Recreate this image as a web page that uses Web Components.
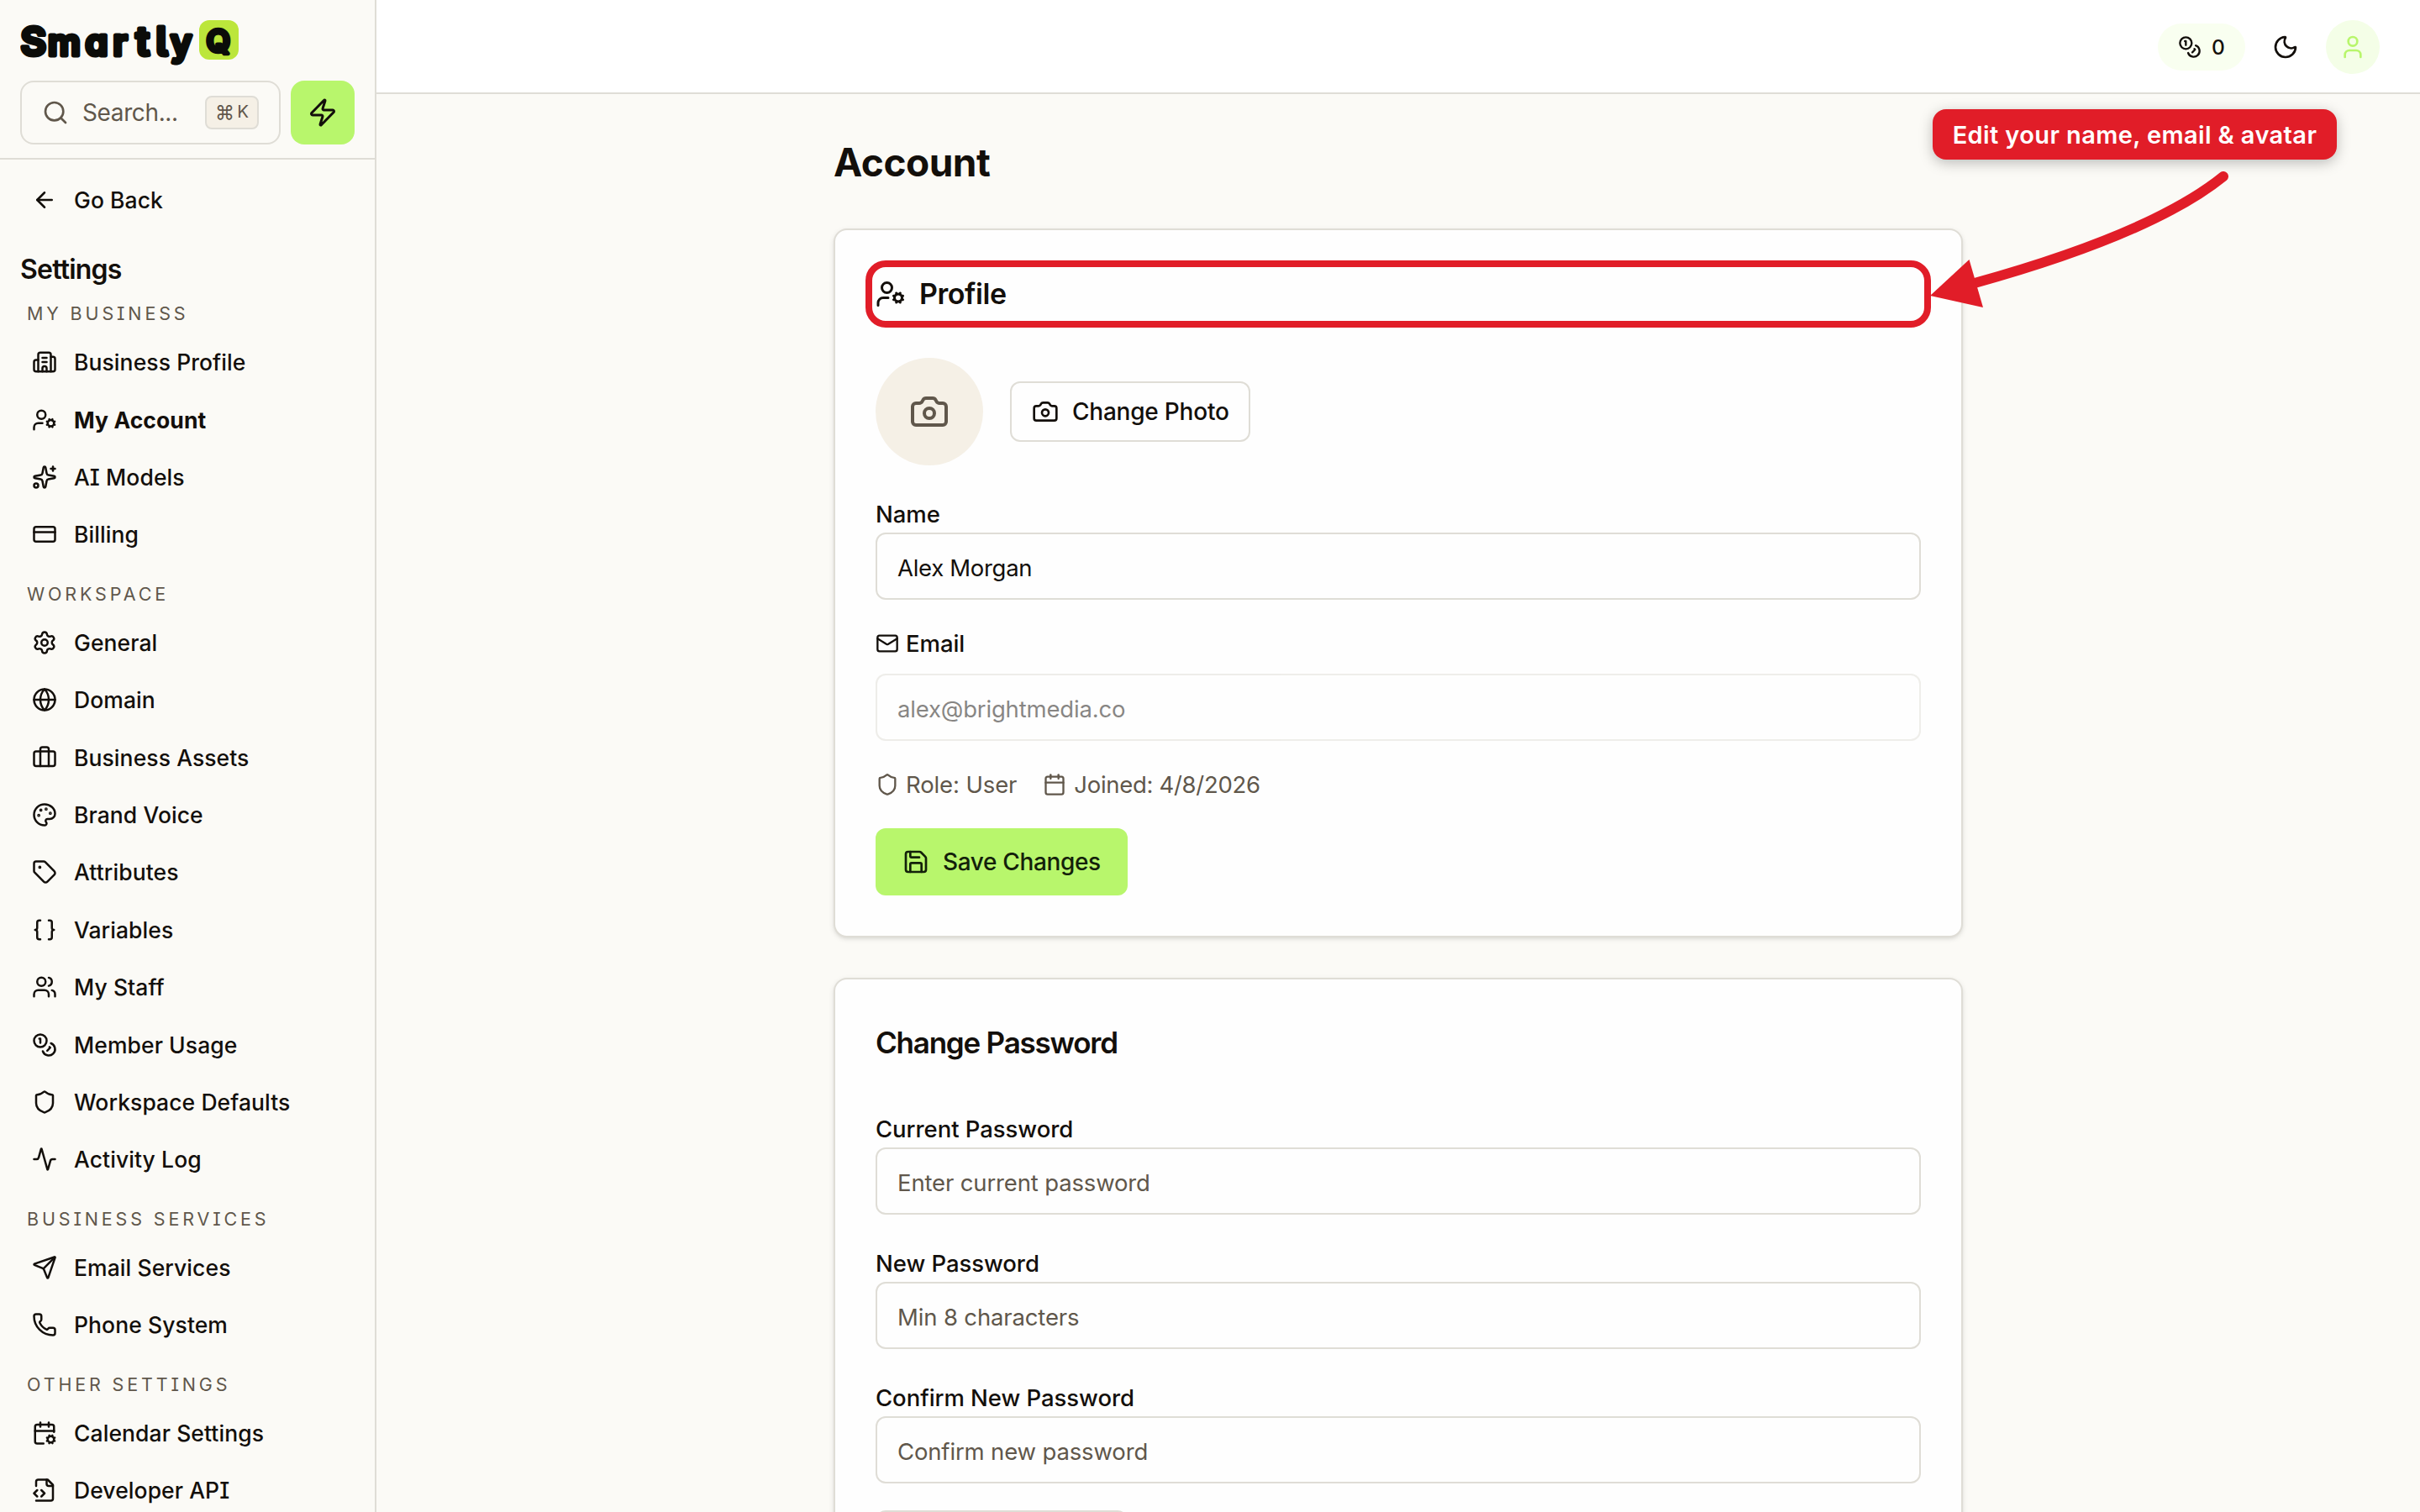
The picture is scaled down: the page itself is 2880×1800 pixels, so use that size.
<!DOCTYPE html>
<html lang="en">
<head>
    <meta charset="utf-8">
    <title>SmartlyQ - Account</title>
    <style>
        :root {
            --bg: #fbfaf6;
            --card: #fefefe;
            --line: #dfddd6;
            --ink: #130f0b;
            --muted: #60574b;
            --sand: #f5f0e6;
            --lime: #b8f66c;
            --red: #e11d28;
        }

        body {
            margin: 0;
            width: 2880px;
            height: 1800px;
            overflow: hidden;
            display: grid;
            grid-template-columns: 448px 1fr;
            background: var(--bg);
            color: var(--ink);
            font: 400 27.5px/40px Inter, "Liberation Sans", sans-serif;
            font-feature-settings: "cv08";
        }
    </style>
</head>
<body>
    <side-bar></side-bar>
    <account-page></account-page>

    <script>
        // 24x24 stroke icons
        const ICONS = {
            search: '<path d="m21 21-4.34-4.34"/><circle cx="11" cy="11" r="8"/>',
            zap: '<path d="M4 14a1 1 0 0 1-.78-1.63l9.9-10.2a.5.5 0 0 1 .86.46l-1.92 6.02A1 1 0 0 0 13 10h7a1 1 0 0 1 .78 1.63l-9.9 10.2a.5.5 0 0 1-.86-.46l1.92-6.02A1 1 0 0 0 11 14z"/>',
            back: '<path d="m12 19-7-7 7-7"/><path d="M19 12H5"/>',
            building: '<path d="M10 12h4"/><path d="M10 8h4"/><path d="M14 21v-3a2 2 0 0 0-4 0v3"/><path d="M6 10H4a2 2 0 0 0-2 2v7a2 2 0 0 0 2 2h16a2 2 0 0 0 2-2V9a2 2 0 0 0-2-2h-2"/><path d="M6 21V5a2 2 0 0 1 2-2h8a2 2 0 0 1 2 2v16"/>',
            userCog: '<path d="M10 15H6a4 4 0 0 0-4 4v2"/><path d="m14.305 16.53.923-.382"/><path d="m15.228 13.852-.923-.383"/><path d="m16.852 12.228-.383-.923"/><path d="m16.852 17.772-.383.924"/><path d="m19.148 12.228.383-.923"/><path d="m19.53 18.696-.382-.924"/><path d="m20.772 13.852.924-.383"/><path d="m20.772 16.148.924.383"/><circle cx="18" cy="15" r="3"/><circle cx="9" cy="7" r="4"/>',
            sparkles: '<path d="M11.017 2.814a1 1 0 0 1 1.966 0l1.051 5.558a2 2 0 0 0 1.594 1.594l5.558 1.051a1 1 0 0 1 0 1.966l-5.558 1.051a2 2 0 0 0-1.594 1.594l-1.051 5.558a1 1 0 0 1-1.966 0l-1.051-5.558a2 2 0 0 0-1.594-1.594l-5.558-1.051a1 1 0 0 1 0-1.966l5.558-1.051a2 2 0 0 0 1.594-1.594z"/><path d="M20 2v4"/><path d="M22 4h-4"/><circle cx="4" cy="20" r="2"/>',
            card: '<rect width="20" height="14" x="2" y="5" rx="2"/><path d="M2 10h20"/>',
            gear: '<path d="M9.671 4.136a2.34 2.34 0 0 1 4.659 0 2.34 2.34 0 0 0 3.319 1.915 2.34 2.34 0 0 1 2.33 4.033 2.34 2.34 0 0 0 0 3.831 2.34 2.34 0 0 1-2.33 4.033 2.34 2.34 0 0 0-3.319 1.915 2.34 2.34 0 0 1-4.659 0 2.34 2.34 0 0 0-3.32-1.915 2.34 2.34 0 0 1-2.33-4.033 2.34 2.34 0 0 0 0-3.831A2.34 2.34 0 0 1 6.35 6.051a2.34 2.34 0 0 0 3.319-1.915"/><circle cx="12" cy="12" r="3"/>',
            globe: '<circle cx="12" cy="12" r="10"/><path d="M12 2a14.5 14.5 0 0 0 0 20 14.5 14.5 0 0 0 0-20"/><path d="M2 12h20"/>',
            briefcase: '<path d="M16 20V4a2 2 0 0 0-2-2h-4a2 2 0 0 0-2 2v16"/><rect width="20" height="14" x="2" y="6" rx="2"/>',
            palette: '<path d="M12 22a1 1 0 0 1 0-20 10 9 0 0 1 10 9 5 5 0 0 1-5 5h-2.25a1.75 1.75 0 0 0-1.4 2.8l.3.4a1.75 1.75 0 0 1-1.4 2.8z"/><circle cx="13.5" cy="6.5" r=".5" fill="currentColor"/><circle cx="17.5" cy="10.5" r=".5" fill="currentColor"/><circle cx="6.5" cy="12.5" r=".5" fill="currentColor"/><circle cx="8.5" cy="7.5" r=".5" fill="currentColor"/>',
            tag: '<path d="M12.586 2.586A2 2 0 0 0 11.172 2H4a2 2 0 0 0-2 2v7.172a2 2 0 0 0 .586 1.414l8.704 8.704a2.426 2.426 0 0 0 3.42 0l6.58-6.58a2.426 2.426 0 0 0 0-3.42z"/><circle cx="7.5" cy="7.5" r=".5" fill="currentColor"/>',
            braces: '<path d="M8 3H7a2 2 0 0 0-2 2v5a2 2 0 0 1-2 2 2 2 0 0 1 2 2v5c0 1.1.9 2 2 2h1"/><path d="M16 21h1a2 2 0 0 0 2-2v-5c0-1.1.9-2 2-2a2 2 0 0 1-2-2V5a2 2 0 0 0-2-2h-1"/>',
            users: '<path d="M16 21v-2a4 4 0 0 0-4-4H6a4 4 0 0 0-4 4v2"/><path d="M16 3.128a4 4 0 0 1 0 7.744"/><path d="M22 21v-2a4 4 0 0 0-3-3.87"/><circle cx="9" cy="7" r="4"/>',
            coins: '<circle cx="8" cy="8" r="6"/><path d="M18.09 10.37A6 6 0 1 1 10.34 18"/><path d="M7 6h1v4"/><path d="m16.71 13.88.7.71-2.82 2.82"/>',
            shield: '<path d="M20 13c0 5-3.5 7.5-7.66 8.95a1 1 0 0 1-.67-.01C7.5 20.5 4 18 4 13V6a1 1 0 0 1 1-1c2 0 4.5-1.2 6.24-2.72a1.17 1.17 0 0 1 1.52 0C14.51 3.81 17 5 19 5a1 1 0 0 1 1 1z"/>',
            activity: '<path d="M22 12h-2.48a2 2 0 0 0-1.93 1.46l-2.35 8.36a.25.25 0 0 1-.48 0L9.24 2.18a.25.25 0 0 0-.48 0l-2.35 8.36A2 2 0 0 1 4.49 12H2"/>',
            send: '<path d="M14.536 21.686a.5.5 0 0 0 .937-.024l6.5-19a.496.496 0 0 0-.635-.635l-19 6.5a.5.5 0 0 0-.024.937l7.93 3.18a2 2 0 0 1 1.112 1.11z"/><path d="m21.854 2.147-10.94 10.939"/>',
            phone: '<path d="M13.832 16.568a1 1 0 0 0 1.213-.303l.355-.465A2 2 0 0 1 17 15h3a2 2 0 0 1 2 2v3a2 2 0 0 1-2 2A18 18 0 0 1 2 4a2 2 0 0 1 2-2h3a2 2 0 0 1 2 2v3a2 2 0 0 1-.8 1.6l-.468.351a1 1 0 0 0-.292 1.233 14 14 0 0 0 6.392 6.384"/>',
            calendarCog: '<path d="m15.228 16.852-.923-.383"/><path d="m15.228 19.148-.923.383"/><path d="M16 2v4"/><path d="m16.47 14.305.382.923"/><path d="m16.852 20.772-.383.924"/><path d="m19.148 15.228.383-.923"/><path d="m19.53 21.696-.382-.924"/><path d="m20.772 16.852.924-.383"/><path d="m20.772 19.148.924.383"/><path d="M21 11V6a2 2 0 0 0-2-2H5a2 2 0 0 0-2 2v14a2 2 0 0 0 2 2h6"/><path d="M3 10h18"/><path d="M8 2v4"/><circle cx="18" cy="18" r="3"/>',
            fileCode: '<path d="M4 22h14a2 2 0 0 0 2-2V7l-5-5H6a2 2 0 0 0-2 2v4"/><path d="M14 2v4a2 2 0 0 0 2 2h4"/><path d="m5 12-3 3 3 3"/><path d="m9 18 3-3-3-3"/>',
            moon: '<path d="M20.985 12.486a9 9 0 1 1-9.473-9.472c.405-.022.617.46.402.803a6 6 0 0 0 8.268 8.268c.344-.215.825-.004.803.401"/>',
            user: '<path d="M19 21v-2a4 4 0 0 0-4-4H9a4 4 0 0 0-4 4v2"/><circle cx="12" cy="7" r="4"/>',
            camera: '<path d="M13.997 4a2 2 0 0 1 1.76 1.05l.486.9A2 2 0 0 0 18.003 7H20a2 2 0 0 1 2 2v9a2 2 0 0 1-2 2H4a2 2 0 0 1-2-2V9a2 2 0 0 1 2-2h1.997a2 2 0 0 0 1.759-1.048l.489-.904A2 2 0 0 1 10.004 4z"/><circle cx="12" cy="13" r="3"/>',
            mail: '<path d="m22 7-8.991 5.727a2 2 0 0 1-2.009 0L2 7"/><rect x="2" y="4" width="20" height="16" rx="2"/>',
            calendar: '<path d="M8 2v4"/><path d="M16 2v4"/><rect width="18" height="18" x="3" y="4" rx="2"/><path d="M3 10h18"/>',
            save: '<path d="M15.2 3a2 2 0 0 1 1.4.6l3.8 3.8a2 2 0 0 1 .6 1.4V19a2 2 0 0 1-2 2H5a2 2 0 0 1-2-2V5a2 2 0 0 1 2-2z"/><path d="M17 21v-7a1 1 0 0 0-1-1H8a1 1 0 0 0-1 1v7"/><path d="M7 3v4a1 1 0 0 0 1 1h7"/>'
        };

        class UiIcon extends HTMLElement {
            constructor() {
                super();
                this.attachShadow({ mode: 'open' });
            }

            connectedCallback() {
                const size = this.getAttribute('size') || 30;
                this.shadowRoot.innerHTML = `
                    <style>
                        :host { display: block; flex: none; width: ${size}px; height: ${size}px; }
                        svg { display: block; }
                    </style>
                    <svg width="${size}" height="${size}" viewBox="0 0 24 24" fill="none" stroke="currentColor"
                        stroke-width="2" stroke-linecap="round" stroke-linejoin="round">${ICONS[this.getAttribute('name')]}</svg>
                `;
            }
        }
        customElements.define('ui-icon', UiIcon);

        class BrandLogo extends HTMLElement {
            constructor() {
                super();
                this.attachShadow({ mode: 'open' }).innerHTML = `
                    <style>
                        :host { display: block; width: 264px; height: 64px; }
                        svg { display: block; }
                        text {
                            font: 600 43px Inter, sans-serif;
                            font-feature-settings: "cv11", "cv05";
                            fill: #0b0c09;
                            stroke: #0b0c09;
                            stroke-width: 5;
                            stroke-linejoin: round;
                        }
                        .tall { font-size: 47px; }
                        .q { font-size: 37px; stroke-width: 4.5px; }
                    </style>
                    <svg width="264" height="64" viewBox="24 20 264 64">
                        <rect x="237" y="24" width="47" height="47" rx="12" fill="#bce63b"/>
                        <text y="65.500" x="24.500 57 101.500 134.500 161.500 185.500 203"><tspan class="tall">S</tspan>mar<tspan class="tall">tl</tspan>y</text>
                        <text class="q" x="245.500" y="62">Q</text>
                    </svg>
                `;
            }
        }
        customElements.define('brand-logo', BrandLogo);

        class SearchBox extends HTMLElement {
            constructor() {
                super();
                this.attachShadow({ mode: 'open' }).innerHTML = `
                    <style>
                        :host {
                            box-sizing: border-box;
                            display: flex;
                            align-items: center;
                            width: 310px;
                            height: 76px;
                            padding: 0 24px;
                            border: 2px solid var(--line);
                            border-radius: 16px;
                            color: var(--muted);
                        }
                        span { flex: 1; margin-left: 16px; font-size: 28px; letter-spacing: -0.38px; }
                        kbd {
                            box-sizing: border-box;
                            display: flex;
                            align-items: center;
                            justify-content: center;
                            gap: 3px;
                            width: 64px;
                            height: 40px;
                            border: 2px solid var(--line);
                            border-radius: 8px;
                            background: var(--sand);
                            font: 23px/36px Inter, sans-serif;
                        }
                        kbd i { font-style: normal; }
                        kbd b { font: 20.5px/34px Inter, sans-serif; padding-bottom: 3px; }
                    </style>
                    <ui-icon name="search" size="32"></ui-icon>
                    <span>Search...</span>
                    <kbd><i>⌘</i><b>K</b></kbd>
                `;
            }
        }
        customElements.define('search-box', SearchBox);

        class NavItem extends HTMLElement {
            constructor() {
                super();
                this.attachShadow({ mode: 'open' });
            }

            connectedCallback() {
                this.shadowRoot.innerHTML = `
                    <style>
                        :host {
                            display: flex;
                            align-items: center;
                            gap: 20px;
                            height: 68.4px;
                            padding-left: 38px;
                            font-size: 26.5px;
                            font-weight: 500;
                            letter-spacing: 0.08px;
                        }
                        :host([active]) { font-weight: 700; }
                    </style>
                    <ui-icon name="${this.getAttribute('icon')}"></ui-icon>
                    <slot></slot>
                `;
            }
        }
        customElements.define('nav-item', NavItem);

        class NavGroup extends HTMLElement {
            constructor() {
                super();
                this.attachShadow({ mode: 'open' });
            }

            connectedCallback() {
                this.shadowRoot.innerHTML = `
                    <style>
                        :host { display: block; margin-bottom: 14.5px; }
                        .label {
                            padding-left: 32px;
                            font-size: 21.5px;
                            line-height: 45.6px;
                            letter-spacing: 3.85px;
                            color: var(--muted);
                        }
                    </style>
                    <div class="label">${this.getAttribute('label')}</div>
                    <slot></slot>
                `;
            }
        }
        customElements.define('nav-group', NavGroup);

        class SideBar extends HTMLElement {
            constructor() {
                super();
                this.attachShadow({ mode: 'open' }).innerHTML = `
                    <style>
                        :host {
                            display: block;
                            height: 1800px;
                            box-sizing: border-box;
                            overflow: hidden;
                            border-right: 2px solid var(--line);
                        }
                        header { padding: 20px 24px 16px; border-bottom: 2px solid var(--line); }
                        .tools { display: flex; gap: 12px; margin-top: 12px; }
                        .quick {
                            display: grid;
                            place-items: center;
                            width: 76px;
                            height: 76px;
                            border-radius: 16px;
                            background: var(--lime);
                        }
                        nav { padding-top: 14.3px; }
                        h2 {
                            margin: 28.3px 0 10.5px 24px;
                            font-size: 32px;
                            font-weight: 600;
                            letter-spacing: -0.8px;
                            line-height: 40px;
                        }
                    </style>
                    <header>
                        <brand-logo></brand-logo>
                        <div class="tools">
                            <search-box></search-box>
                            <div class="quick"><ui-icon name="zap" size="36"></ui-icon></div>
                        </div>
                    </header>
                    <nav>
                        <nav-item icon="back">Go Back</nav-item>
                        <h2>Settings</h2>
                        <nav-group label="MY BUSINESS">
                            <nav-item icon="building">Business Profile</nav-item>
                            <nav-item icon="userCog" active>My Account</nav-item>
                            <nav-item icon="sparkles">AI Models</nav-item>
                            <nav-item icon="card">Billing</nav-item>
                        </nav-group>
                        <nav-group label="WORKSPACE">
                            <nav-item icon="gear">General</nav-item>
                            <nav-item icon="globe">Domain</nav-item>
                            <nav-item icon="briefcase">Business Assets</nav-item>
                            <nav-item icon="palette">Brand Voice</nav-item>
                            <nav-item icon="tag">Attributes</nav-item>
                            <nav-item icon="braces">Variables</nav-item>
                            <nav-item icon="users">My Staff</nav-item>
                            <nav-item icon="coins">Member Usage</nav-item>
                            <nav-item icon="shield">Workspace Defaults</nav-item>
                            <nav-item icon="activity">Activity Log</nav-item>
                        </nav-group>
                        <nav-group label="BUSINESS SERVICES">
                            <nav-item icon="send">Email Services</nav-item>
                            <nav-item icon="phone">Phone System</nav-item>
                        </nav-group>
                        <nav-group label="OTHER SETTINGS">
                            <nav-item icon="calendarCog">Calendar Settings</nav-item>
                            <nav-item icon="fileCode">Developer API</nav-item>
                        </nav-group>
                    </nav>
                `;
            }
        }
        customElements.define('side-bar', SideBar);

        class TopBar extends HTMLElement {
            constructor() {
                super();
                this.attachShadow({ mode: 'open' }).innerHTML = `
                    <style>
                        :host {
                            display: flex;
                            align-items: center;
                            justify-content: flex-end;
                            gap: 16px;
                            height: 112px;
                            padding: 2px 48px 0 0;
                            box-sizing: border-box;
                            background: #fff;
                            border-bottom: 2px solid var(--line);
                        }
                        .credits {
                            display: flex;
                            align-items: center;
                            gap: 12px;
                            width: 104px;
                            height: 56px;
                            padding-left: 24px;
                            box-sizing: border-box;
                            border-radius: 28px;
                            background: #f9fff0;
                            font-size: 24.5px;
                            font-weight: 500;
                        }
                        .round {
                            display: grid;
                            place-items: center;
                            width: 64px;
                            height: 64px;
                            border-radius: 50%;
                        }
                        .me { background: #f4fee7; color: var(--lime); }
                    </style>
                    <div class="credits"><ui-icon name="coins" size="28"></ui-icon>0</div>
                    <div class="round"><ui-icon name="moon" size="32"></ui-icon></div>
                    <div class="round me"><ui-icon name="user" size="32"></ui-icon></div>
                `;
            }
        }
        customElements.define('top-bar', TopBar);

        class UiCard extends HTMLElement {
            constructor() {
                super();
                this.attachShadow({ mode: 'open' }).innerHTML = `
                    <style>
                        :host {
                            display: block;
                            padding: 48px;
                            border: 2px solid var(--line);
                            border-radius: 16px;
                            background: var(--card);
                            box-shadow: 0 2px 6px rgba(20, 15, 10, 0.1), 0 2px 4px -2px rgba(20, 15, 10, 0.1);
                        }
                    </style>
                    <slot></slot>
                `;
            }
        }
        customElements.define('ui-card', UiCard);

        class UiButton extends HTMLElement {
            constructor() {
                super();
                this.attachShadow({ mode: 'open' });
            }

            connectedCallback() {
                this.shadowRoot.innerHTML = `
                    <style>
                        :host {
                            box-sizing: border-box;
                            display: flex;
                            align-items: center;
                            gap: 16px;
                            width: 286px;
                            height: 72px;
                            padding-left: 24px;
                            border: 2px solid var(--line);
                            border-radius: 12px;
                            font-size: 28px;
                            font-weight: 500;
                            letter-spacing: -0.22px;
                            white-space: nowrap;
                        }
                        :host([primary]) {
                            width: 300px;
                            height: 80px;
                            padding-left: 32px;
                            border: 0;
                            background: var(--lime);
                            color: #13210a;
                            letter-spacing: -0.36px;
                        }
                    </style>
                    <ui-icon name="${this.getAttribute('icon')}" size="32"></ui-icon>
                    <slot></slot>
                `;
            }
        }
        customElements.define('ui-button', UiButton);

        class TextField extends HTMLElement {
            constructor() {
                super();
                this.attachShadow({ mode: 'open' });
            }

            connectedCallback() {
                const icon = this.getAttribute('icon');
                const value = this.getAttribute('value');
                this.shadowRoot.innerHTML = `
                    <style>
                        :host { display: block; }
                        .label { display: flex; align-items: center; gap: 8px; height: 40px; font-weight: 500; letter-spacing: -0.05px; }
                        .box {
                            box-sizing: border-box;
                            height: 80px;
                            margin-top: 2px;
                            padding: 20px 24px 0;
                            border: 2px solid var(--line);
                            border-radius: 12px;
                            letter-spacing: -0.15px;
                        }
                        .value { letter-spacing: -0.3px; }
                        .hint { color: var(--muted); }
                        :host([disabled]) .box { margin-top: 16px; opacity: 0.5; letter-spacing: -0.18px; }
                    </style>
                    <div class="label">${icon ? `<ui-icon name="${icon}" size="28"></ui-icon>` : ''}${this.getAttribute('label')}</div>
                    <div class="box ${value ? 'value' : 'hint'}">${value || this.getAttribute('placeholder')}</div>
                `;
            }
        }
        customElements.define('text-field', TextField);

        class CallOut extends HTMLElement {
            constructor() {
                super();
                this.attachShadow({ mode: 'open' }).innerHTML = `
                    <style>
                        :host { position: absolute; left: 2280px; top: 120px; width: 520px; height: 260px; }
                        .tip {
                            position: absolute;
                            left: 20px;
                            top: 10px;
                            width: 481px;
                            height: 60px;
                            border-radius: 16px;
                            background: var(--red);
                            box-shadow: 0 4px 16px rgba(0, 0, 0, 0.25);
                            color: #fff;
                            font-size: 29px;
                            font-weight: 600;
                            line-height: 62px;
                            letter-spacing: 0.38px;
                            text-align: center;
                            white-space: nowrap;
                        }
                        svg { position: absolute; left: 0; top: 0; }
                    </style>
                    <div class="tip"><slot></slot></div>
                    <svg width="520" height="260" viewBox="2280 120 520 260">
                        <path d="M2646 210Q2562 278 2350 337" fill="none" stroke="#e11d28" stroke-width="12" stroke-linecap="round"/>
                        <path d="M2297 352 2343.500 309 2360 366Z" fill="#e11d28"/>
                    </svg>
                `;
            }
        }
        customElements.define('call-out', CallOut);

        class AccountPage extends HTMLElement {
            constructor() {
                super();
                this.attachShadow({ mode: 'open' }).innerHTML = `
                    <style>
                        :host { display: block; height: 1800px; overflow: hidden; }
                        main { width: 1344px; margin: 0 auto; padding-top: 48px; }
                        h1 { margin: 0 0 46px; font-size: 46px; font-weight: 700; line-height: 66px; letter-spacing: -0.48px; }
                        h3 {
                            position: relative;
                            display: flex;
                            align-items: center;
                            gap: 16px;
                            height: 56px;
                            margin: 0 0 48px;
                            font-size: 34px;
                            font-weight: 600;
                            letter-spacing: -0.45px;
                        }
                        h3.password { height: 54px; margin-bottom: 56px; font-size: 35px; letter-spacing: -1.22px; }
                        .ring {
                            position: absolute;
                            inset: -12px;
                            border: 8px solid var(--red);
                            border-radius: 24px;
                        }
                        .photo { display: flex; align-items: center; gap: 32px; margin-bottom: 38px; }
                        .avatar {
                            display: grid;
                            place-items: center;
                            width: 128px;
                            height: 128px;
                            border-radius: 50%;
                            background: var(--sand);
                            color: var(--muted);
                        }
                        text-field + text-field { margin-top: 38px; }
                        text-field + text-field[disabled] { margin-top: 32px; }
                        .meta { display: flex; gap: 31px; margin: 32px 0; color: var(--muted); }
                        .meta span { display: flex; align-items: center; gap: 8px; letter-spacing: -0.12px; }
                        .meta .joined { gap: 9px; letter-spacing: -0.3px; }
                        .submit {
                            width: 296px;
                            height: 76px;
                            margin-top: 32px;
                            border: 2px solid var(--line);
                            border-radius: 12px;
                        }
                        ui-card + ui-card { margin-top: 48px; }
                    </style>
                    <top-bar></top-bar>
                    <main>
                        <h1>Account</h1>
                        <ui-card>
                            <h3><ui-icon name="userCog" size="36"></ui-icon>Profile<div class="ring"></div></h3>
                            <div class="photo">
                                <div class="avatar"><ui-icon name="camera" size="48"></ui-icon></div>
                                <ui-button icon="camera">Change Photo</ui-button>
                            </div>
                            <text-field label="Name" value="Alex Morgan"></text-field>
                            <text-field label="Email" icon="mail" value="alex@brightmedia.co" disabled></text-field>
                            <div class="meta">
                                <span><ui-icon name="shield" size="28"></ui-icon>Role: User</span>
                                <span class="joined"><ui-icon name="calendar" size="28"></ui-icon>Joined: 4/8/2026</span>
                            </div>
                            <ui-button icon="save" primary>Save Changes</ui-button>
                        </ui-card>
                        <ui-card>
                            <h3 class="password">Change Password</h3>
                            <text-field label="Current Password" placeholder="Enter current password"></text-field>
                            <text-field label="New Password" placeholder="Min 8 characters"></text-field>
                            <text-field label="Confirm New Password" placeholder="Confirm new password"></text-field>
                            <div class="submit"></div>
                        </ui-card>
                    </main>
                    <call-out>Edit your name, email &amp; avatar</call-out>
                `;
            }
        }
        customElements.define('account-page', AccountPage);
    </script>
</body>
</html>
